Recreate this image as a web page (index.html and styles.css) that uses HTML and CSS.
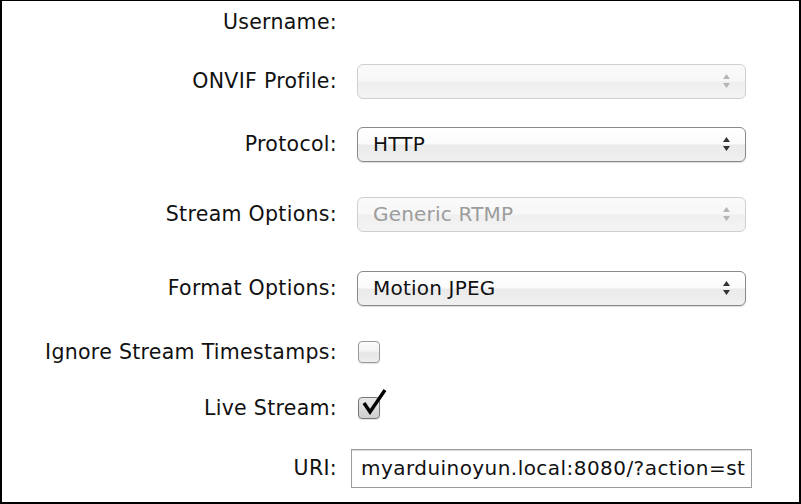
FILE: index.html
```html
<!DOCTYPE html>
<html>
<head>
<meta charset="utf-8">
<link rel="stylesheet" href="styles.css">
</head>
<body>
<div class="frame">
  <div class="form">
    <div class="label">Username:</div>
    <div class="cell"></div>

    <div class="label">ONVIF Profile:</div>
    <div class="cell"><div class="select disabled"><span class="value"></span><svg class="arrows" width="9" height="16" viewBox="0 0 9 16"><path d="M4.5 1 L8 6 H1 Z M1 10 H8 L4.5 15 Z"/></svg></div></div>

    <div class="label">Protocol:</div>
    <div class="cell"><div class="select"><span class="value">HTTP</span><svg class="arrows" width="9" height="16" viewBox="0 0 9 16"><path d="M4.5 1 L8 6 H1 Z M1 10 H8 L4.5 15 Z"/></svg></div></div>

    <div class="label">Stream Options:</div>
    <div class="cell"><div class="select disabled"><span class="value">Generic RTMP</span><svg class="arrows" width="9" height="16" viewBox="0 0 9 16"><path d="M4.5 1 L8 6 H1 Z M1 10 H8 L4.5 15 Z"/></svg></div></div>

    <div class="label">Format Options:</div>
    <div class="cell"><div class="select"><span class="value">Motion JPEG</span><svg class="arrows" width="9" height="16" viewBox="0 0 9 16"><path d="M4.5 1 L8 6 H1 Z M1 10 H8 L4.5 15 Z"/></svg></div></div>

    <div class="label">Ignore Stream Timestamps:</div>
    <div class="cell"><div class="checkbox"></div></div>

    <div class="label">Live Stream:</div>
    <div class="cell"><div class="checkbox checked"><svg class="tick" width="30" height="32" viewBox="0 0 30 32"><path d="M4 16 L10 25 L25 3" fill="none" stroke="#000" stroke-width="3.4" stroke-linejoin="miter" stroke-linecap="butt"/></svg></div></div>

    <div class="label">URI:</div>
    <div class="cell"><div class="input"><span class="text">myarduinoyun.local:8080/?action=st</span></div></div>
  </div>
</div>
</body>
</html>
```

FILE: styles.css
```css
html, body {
  margin: 0;
  padding: 0;
  background: #fff;
}

.frame {
  width: 801px;
  height: 504px;
  box-sizing: border-box;
  border-style: solid;
  border-color: #000;
  border-width: 1px 2px 2px 2px;
  overflow: hidden;
  background: #fff;
  font-family: "DejaVu Sans", sans-serif;
  font-size: 20px;
  color: #111;
}

.form {
  display: grid;
  grid-template-columns: 335px 1fr;
  grid-template-rows: 42px 76px 50px 90px 58px 70px 42px 78px;
  column-gap: 14px;
  align-items: center;
}

.label {
  font-size: 20.5px;
  text-align: right;
  white-space: nowrap;
  letter-spacing: 0.3px;
  color: #111;
}

.cell {
  display: flex;
  align-items: center;
}

.select {
  margin-left: 6px;
  width: 389px;
  height: 35px;
  box-sizing: border-box;
  border: 1px solid #8a8a8a;
  border-radius: 6px;
  background: linear-gradient(#ffffff 0%, #fbfbfb 48%, #eaeaea 52%, #f0f0f0 100%);
  box-shadow: 0 1px 1px rgba(0,0,0,0.15);
  display: flex;
  align-items: center;
  justify-content: space-between;
  padding: 0 14px 0 15px;
}

.select .value {
  color: #111;
  white-space: nowrap;
  letter-spacing: 0.2px;
}

.select .arrows {
  fill: #333;
}

.select.disabled {
  border-color: #cfcfcf;
  background: linear-gradient(#fafafa 0%, #f7f7f7 48%, #efefef 52%, #f3f3f3 100%);
  box-shadow: none;
}

.select.disabled .value {
  color: #9c9c9c;
}

.select.disabled .arrows {
  fill: #b5b5b5;
}

.checkbox {
  position: relative;
  margin-left: 7px;
  width: 22px;
  height: 22px;
  box-sizing: border-box;
  border: 1px solid #9a9a9a;
  border-radius: 4px;
  background: linear-gradient(#fcfcfc 0%, #f4f4f4 45%, #e6e6e6 55%, #eeeeee 100%);
  box-shadow: 0 1px 1px rgba(0,0,0,0.12);
}

.checkbox.checked {
  border-color: #777;
  background: linear-gradient(#e8e8e8 0%, #dcdcdc 50%, #cfcfcf 100%);
}

.tick {
  position: absolute;
  left: 1px;
  top: -11px;
}

.input {
  width: 401px;
  height: 39px;
  box-sizing: border-box;
  border: 1px solid #9b9b9b;
  box-shadow: inset 0 1px 1px rgba(0,0,0,0.15);
  background: #fff;
  padding: 0 0 0 9px;
  display: flex;
  align-items: center;
  white-space: nowrap;
  overflow: hidden;
  color: #111;
}

.input .text {
  letter-spacing: 0.45px;
}
```
